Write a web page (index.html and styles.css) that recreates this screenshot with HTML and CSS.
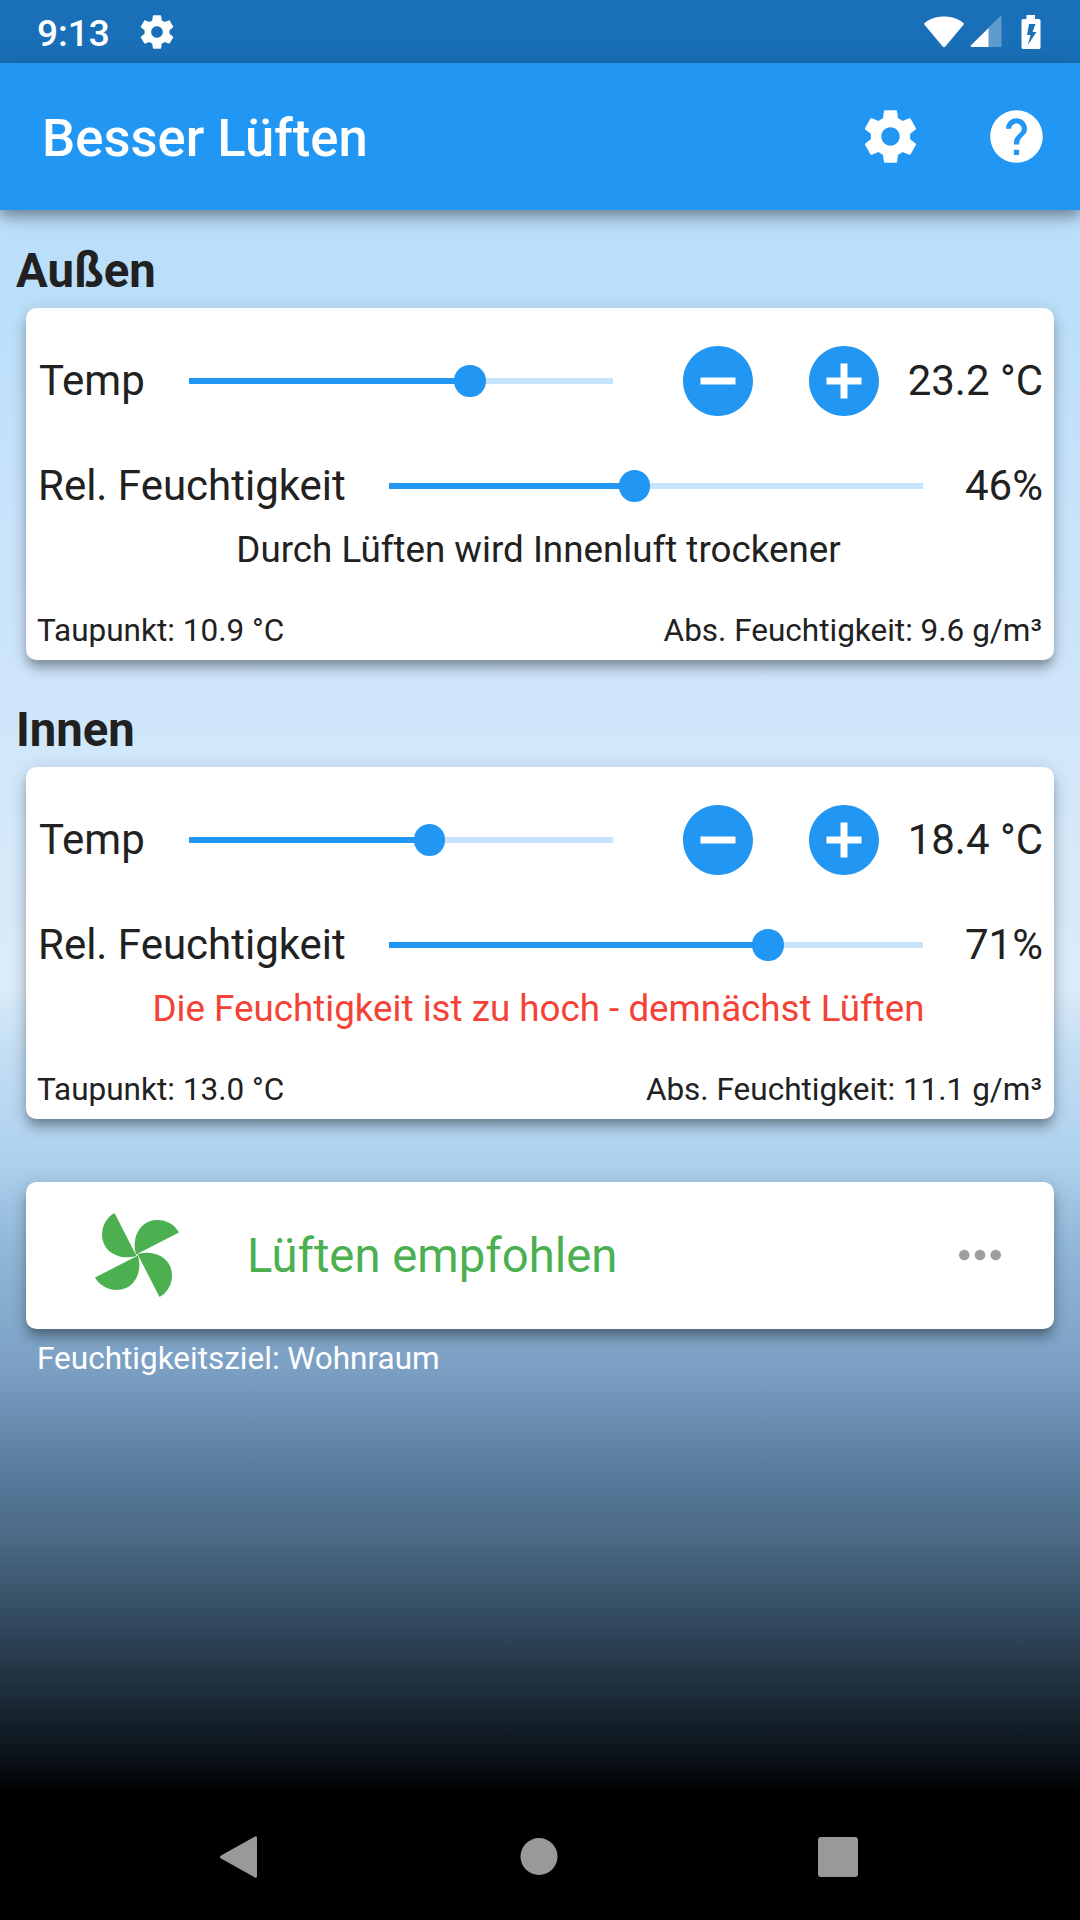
FILE: index.html
```
<!DOCTYPE html>
<html lang="de">

<head>
    <meta charset="UTF-8">
    <meta name="viewport" content="width=device-width, initial-scale=1.0">
    <title>Besser Lüften</title>
    <link rel="stylesheet" href="styles.css">
</head>

<body>
    <!-- shared icons -->
    <svg class="sprite" aria-hidden="true">
        <symbol id="gear" viewBox="0 0 24 24">
            <path d="M19.43 12.98c.04-.32.07-.64.07-.98s-.03-.66-.07-.98l2.11-1.65c.19-.15.24-.42.12-.64l-2-3.46c-.12-.22-.39-.3-.61-.22l-2.49 1c-.52-.4-1.08-.73-1.69-.98l-.38-2.65C14.46 2.18 14.25 2 14 2h-4c-.25 0-.46.18-.49.42l-.38 2.65c-.61.25-1.17.59-1.69.98l-2.49-1c-.23-.09-.49 0-.61.22l-2 3.46c-.13.22-.07.49.12.64l2.11 1.65c-.04.32-.07.65-.07.98s.03.66.07.98l-2.11 1.65c-.19.15-.24.42-.12.64l2 3.46c.12.22.39.3.61.22l2.49-1c.52.4 1.08.73 1.69.98l.38 2.65c.03.24.24.42.49.42h4c.25 0 .46-.18.49-.42l.38-2.65c.61-.25 1.17-.59 1.69-.98l2.49 1c.23.09.49 0 .61-.22l2-3.46c.12-.22.07-.49-.12-.64l-2.11-1.65zM12 15.5c-1.93 0-3.5-1.57-3.5-3.5s1.57-3.5 3.5-3.5 3.5 1.57 3.5 3.5-1.57 3.5-3.5 3.5z"/>
        </symbol>
        <symbol id="minus" viewBox="0 0 24 24">
            <path d="M12 2C6.48 2 2 6.48 2 12s4.48 10 10 10 10-4.48 10-10S17.52 2 12 2zm5 11H7v-2h10v2z"/>
        </symbol>
        <symbol id="plus" viewBox="0 0 24 24">
            <path d="M12 2C6.48 2 2 6.48 2 12s4.48 10 10 10 10-4.48 10-10S17.52 2 12 2zm5 11h-4v4h-2v-4H7v-2h4V7h2v4h4v2z"/>
        </symbol>
    </svg>

    <div class="statusbar">
        <span class="time">9:13</span>
        <svg class="status-gear"><use href="#gear"/></svg>
        <div class="status-icons">
            <svg width="42" height="34" viewBox="0 0 42 34">
                <path d="M1.5 8C7 3.500 14 1.500 21 1.500S35 3.500 40.500 8Q41 9 40.500 9.700L22.500 31.300Q21 33 19.500 31.300L1.500 9.700Q1 9 1.500 8z"/>
            </svg>
            <svg width="32" height="34" viewBox="0 0 32 34">
                <path opacity=".3" d="M30.500 1Q31.500.8 31.500 2V32H18V13z"/>
                <path d="M18.500 13V32H1.500Q0 31.500 1 30.200z"/>
            </svg>
            <svg class="battery" width="20" height="34" viewBox="0 0 20 34">
                <path fill-rule="evenodd" d="M5.500 0H14V4H18Q19.500 4 19.500 5.500V32.500Q19.500 34 18 34H2Q.5 34 .5 32.500V5.500Q.5 4 2 4H5.500zM8 9L6 20H9.500L6.800 30L15.500 17H11.500L14.500 9z"/>
            </svg>
        </div>
    </div>

    <header class="appbar">
        <h1 class="title">Besser Lüften</h1>
        <svg class="action"><use href="#gear"/></svg>
        <svg class="action" viewBox="0 0 24 24">
            <path d="M12 2C6.480 2 2 6.480 2 12s4.480 10 10 10 10-4.480 10-10S17.520 2 12 2zm1 17h-2v-2h2v2zm2.070-7.750l-.9.920C13.450 12.900 13 13.500 13 15h-2v-.5c0-1.100.450-2.100 1.170-2.830l1.240-1.260c.370-.360.590-.860.590-1.410 0-1.100-.9-2-2-2s-2 .9-2 2H8c0-2.210 1.790-4 4-4s4 1.790 4 4c0 .880-.360 1.680-.930 2.250z"/>
        </svg>
    </header>

    <main class="content">
        <h2 class="heading">Außen</h2>
        <section class="card climate">
            <div class="row temp-row">
                <span class="label">Temp</span>
                <div class="slider">
                    <div class="fill" style="width: 66.3%"></div>
                    <div class="thumb"></div>
                </div>
                <svg class="round-btn"><use href="#minus"/></svg>
                <svg class="round-btn"><use href="#plus"/></svg>
                <span class="value">23.2 °C</span>
            </div>
            <div class="row hum-row">
                <span class="label">Rel. Feuchtigkeit</span>
                <div class="slider">
                    <div class="fill" style="width: 46%"></div>
                    <div class="thumb"></div>
                </div>
                <span class="value">46%</span>
            </div>
            <p class="hint">Durch Lüften wird Innenluft trockener</p>
            <div class="details">
                <span>Taupunkt: 10.9 °C</span>
                <span>Abs. Feuchtigkeit: 9.6 g/m³</span>
            </div>
        </section>

        <h2 class="heading">Innen</h2>
        <section class="card climate">
            <div class="row temp-row">
                <span class="label">Temp</span>
                <div class="slider">
                    <div class="fill" style="width: 56.7%"></div>
                    <div class="thumb"></div>
                </div>
                <svg class="round-btn"><use href="#minus"/></svg>
                <svg class="round-btn"><use href="#plus"/></svg>
                <span class="value">18.4 °C</span>
            </div>
            <div class="row hum-row">
                <span class="label">Rel. Feuchtigkeit</span>
                <div class="slider">
                    <div class="fill" style="width: 71%"></div>
                    <div class="thumb"></div>
                </div>
                <span class="value">71%</span>
            </div>
            <p class="hint warning">Die Feuchtigkeit ist zu hoch - demnächst Lüften</p>
            <div class="details">
                <span>Taupunkt: 13.0 °C</span>
                <span>Abs. Feuchtigkeit: 11.1 g/m³</span>
            </div>
        </section>

        <section class="card result">
            <svg class="fan" viewBox="-43 -43 86 86">
                <path id="blade" d="M-1 -.5L42 -22.500C36 -33 23 -38 11 -33C0 -28 -5 -14 -1 -.5z"/>
                <use href="#blade" transform="rotate(90)"/>
                <use href="#blade" transform="rotate(180)"/>
                <use href="#blade" transform="rotate(270)"/>
            </svg>
            <span class="result-text">Lüften empfohlen</span>
            <svg class="more" viewBox="0 0 42 12">
                <circle cx="5.300" cy="6" r="5.300"/>
                <circle cx="21" cy="6" r="5.300"/>
                <circle cx="36.700" cy="6" r="5.300"/>
            </svg>
        </section>
        <p class="target">Feuchtigkeitsziel: Wohnraum</p>
    </main>

    <nav class="navbar">
        <svg viewBox="0 0 44 44"><path d="M39 1.500Q41 .5 41 3V41Q41 43.500 39 42.500L5 23.500Q3 22 5 20.500z"/></svg>
        <svg viewBox="0 0 44 44"><circle cx="23" cy="21.500" r="18.500"/></svg>
        <svg viewBox="0 0 44 44"><rect x="2" y="2" width="40" height="40" rx="3"/></svg>
    </nav>
</body>

</html>
```
FILE: styles.css
```
* {
    margin: 0;
    padding: 0;
    box-sizing: border-box;
}

body {
    display: flex;
    flex-direction: column;
    width: 1080px;
    height: 1920px;
    overflow: hidden;
    font-family: Roboto, sans-serif;
    color: #212121;
    background: linear-gradient(#bbdefb 0, #bbdffa 300px, #c9e3fa 540px, #cfe6fb 700px, #d3e8f9 800px, #dbebf9 985px, #c2ddf3 1055px, #aed1ee 1160px, #93b9d9 1240px, #7a9fc3 1370px, #56799a 1480px, #4a6983 1540px, #334a60 1620px, #1c2c38 1695px, #0b131b 1755px, #000 1795px);
}

.sprite {
    display: none;
}

/* status bar + app bar */
.statusbar {
    display: flex;
    align-items: center;
    flex: none;
    height: 63px;
    padding: 1px 39px 0 37px;
    background-color: #1a70b8;
    fill: white;
}

.time {
    width: 100px;
    color: white;
    font-size: 37px;
    font-weight: 500;
    line-height: 60px;
    padding-top: 3px;
    white-space: nowrap;
}

.status-gear {
    width: 40px;
    height: 40px;
}

.status-icons {
    display: flex;
    align-items: center;
    gap: 5px;
    margin-left: auto;
}

.battery {
    margin-left: 14px;
}

.appbar {
    display: flex;
    align-items: center;
    flex: none;
    gap: 63px;
    height: 147px;
    padding: 0 32px 0 42px;
    background-color: #2196f3;
    fill: white;
    box-shadow: 0 5px 10px rgba(0, 0, 0, .2), 0 10px 13px rgba(0, 0, 0, .14), 0 3px 26px rgba(0, 0, 0, .12);
}

.title {
    flex: 1;
    color: white;
    font-size: 52.6px;
    font-weight: 500;
    padding-top: 2px;
}

.action {
    width: 63px;
    height: 63px;
}

/* cards */
.content {
    flex: 1;
    padding: 31px 26px 0;
}

.heading {
    height: 66.5px;
    margin-left: -10px;
    font-size: 47.25px;
    font-weight: 700;
    line-height: 60px;
}

.card {
    border-radius: 10.5px;
    background-color: white;
    box-shadow: 0 8px 10px -3px rgba(0, 0, 0, .22), 0 10px 13px rgba(0, 0, 0, .14), 0 3px 18px rgba(0, 0, 0, .14);
}

.climate {
    height: 352px;
    padding: 10.5px 11px 0 12px;
    margin-bottom: 40.500px;
}

.row {
    display: flex;
    align-items: center;
    font-size: 42px;
}

.temp-row {
    height: 126px;
}

.hum-row {
    height: 84px;
}

.label,
.value {
    padding-bottom: 2px;
    white-space: nowrap;
}

.temp-row .label {
    width: 151px;
    padding-left: 1px;
}

.hum-row .label {
    width: 351px;
}

.slider {
    display: flex;
    align-items: center;
    height: 5.25px;
    background-color: #c8e4fc;
}

.temp-row .slider {
    width: 424px;
    margin-right: 63px;
}

.hum-row .slider {
    width: 534px;
}

.fill {
    height: 100%;
    background-color: #2196f3;
}

.thumb {
    flex: none;
    width: 31.5px;
    height: 31.5px;
    margin-left: -15.75px;
    border-radius: 50%;
    background-color: #2196f3;
}

.round-btn {
    width: 84px;
    height: 84px;
    fill: #2196f3;
}

.round-btn + .round-btn {
    margin-left: 42px;
}

.value {
    margin-left: auto;
}

.hint {
    padding-right: 4px;
    font-size: 36.75px;
    line-height: 43px;
    text-align: center;
    white-space: nowrap;
}

.warning {
    color: #f44336;
}

.details {
    display: flex;
    justify-content: space-between;
    margin: 41px 1px 0 -1px;
    font-size: 31.5px;
    line-height: 37px;
}

.result {
    display: flex;
    align-items: center;
    height: 147px;
    margin-top: 63px;
    padding: 0 53px 0 68px;
}

.fan {
    width: 86px;
    height: 86px;
    fill: #4caf50;
}

.result-text {
    margin-left: 67px;
    padding-top: 1px;
    color: #4caf50;
    font-size: 47.25px;
}

.more {
    width: 42px;
    height: 12px;
    margin-left: auto;
    fill: #9e9e9e;
}

.target {
    margin: 11px 0 0 11px;
    color: white;
    font-size: 31.5px;
    line-height: 37px;
}

/* android navigation */
.navbar {
    display: flex;
    align-items: center;
    justify-content: space-between;
    flex: none;
    height: 126px;
    padding: 0 220px 0 216px;
    background-color: black;
    fill: #999;
}

.navbar svg {
    width: 44px;
    height: 44px;
}
```
